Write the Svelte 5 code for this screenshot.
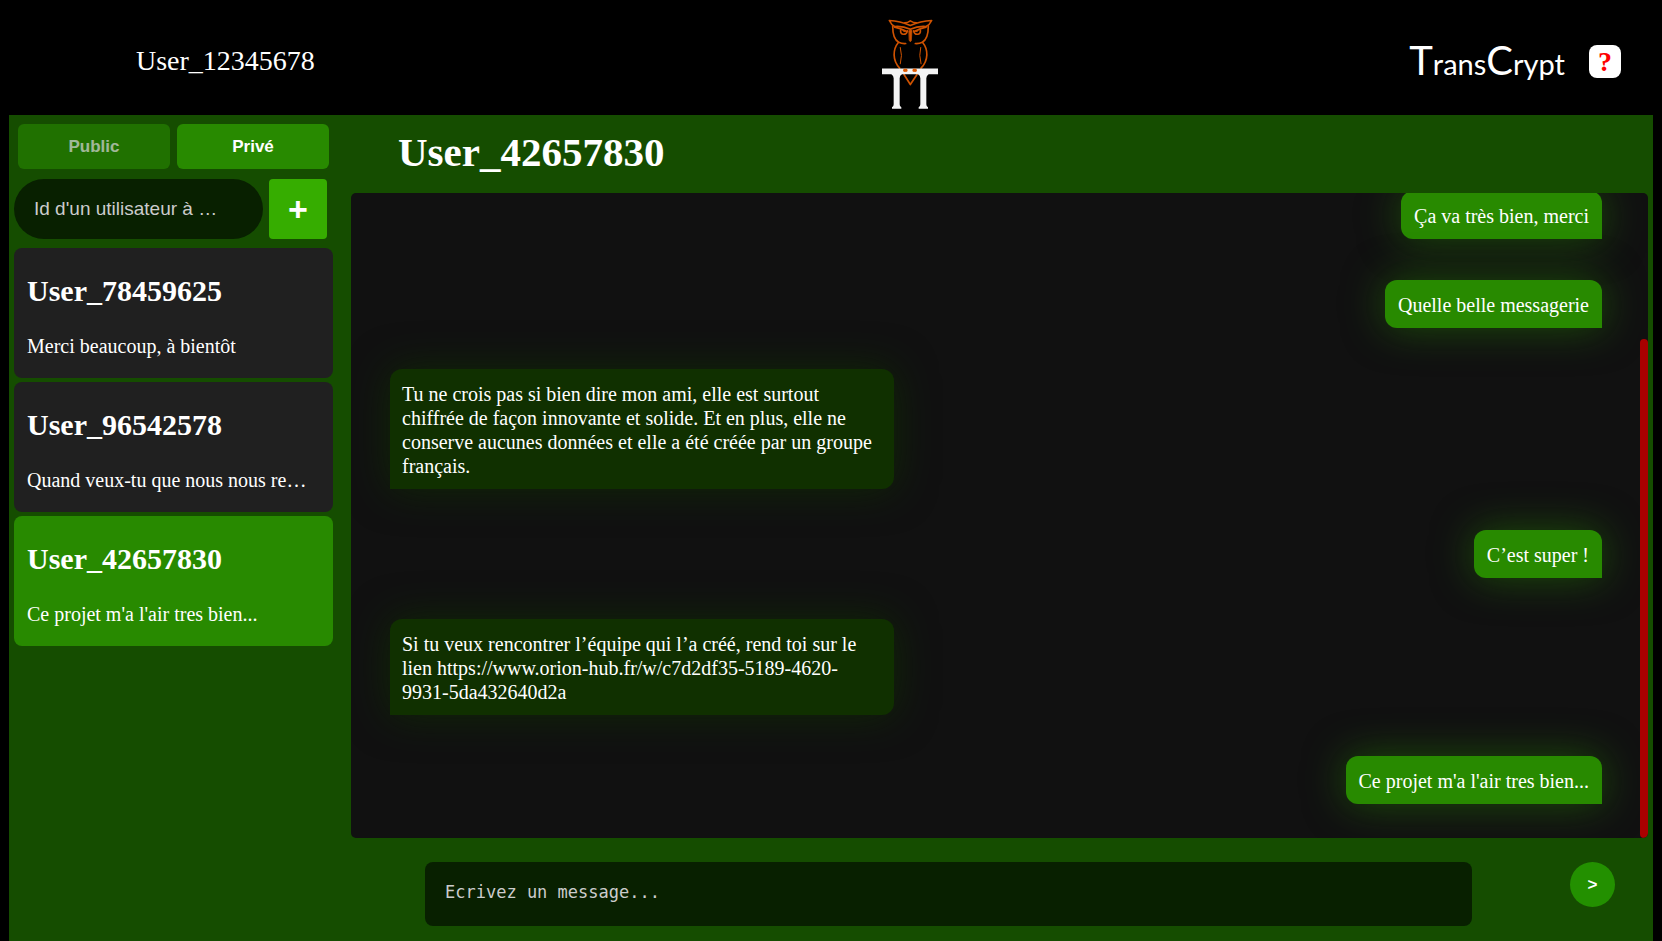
<script>
  const conversations = [
    { name: 'User_78459625', preview: 'Merci beaucoup, à bientôt' },
    { name: 'User_96542578', preview: 'Quand veux-tu que nous nous re…' },
    { name: 'User_42657830', preview: "Ce projet m'a l'air tres bien..." }
  ];
  const messages = [
    { mine: true, text: 'Ça va très bien, merci' },
    { mine: true, text: 'Quelle belle messagerie' },
    { mine: false, text: 'Tu ne crois pas si bien dire mon ami, elle est surtout chiffrée de façon innovante et solide. Et en plus, elle ne conserve aucunes données et elle a été créée par un groupe français.' },
    { mine: true, text: 'C’est super !' },
    { mine: false, text: 'Si tu veux rencontrer l’équipe qui l’a créé, rend toi sur le lien https://www.orion-hub.fr/w/c7d2df35-5189-4620-9931-5da432640d2a' },
    { mine: true, text: "Ce projet m'a l'air tres bien..." }
  ];
  let active = $state('User_42657830');
  let search = $state('');
  let draft = $state('');
</script>

<div class="page">
  <header>
    <span class="me">User_12345678</span>
    <svg class="logo" viewBox="66 58 168 272" aria-hidden="true">
      <g fill="none" stroke="#cf5200" stroke-width="5" stroke-linecap="round" stroke-linejoin="round">
        <path d="M88 62 Q120 64 151 77 Q182 64 215 62 Q209 75 198 80 Q174 78 151 88 Q128 78 104 80 Q94 75 88 62Z" />
        <path d="M134 69 Q143 69 151 63 Q160 69 169 69" />
        <path d="M98 78 C98 102 101 120 116 127 Q126 132 137 131 M205 78 C205 102 201 120 187 127 Q177 132 166 131" />
        <path d="M104 82 Q119 85 139 94 M198 82 Q184 85 164 94" />
        <path d="M122 91 C119 107 140 107 142 93 M181 91 C184 107 163 107 161 93" />
        <path d="M128 92 Q132 99 137 94 M175 92 Q171 99 166 94" stroke-width="3" />
        <path d="M147 92 Q152 89 156 92 L154 122 L151 126 L148 122Z" fill="#cf5200" stroke-width="2" />
        <path d="M115 128 C98 149 97 181 119 205 M188 128 C205 149 206 181 183 205" />
        <path d="M121 143 Q128 166 121 192 M182 143 Q176 166 183 192" stroke-width="3" />
        <path d="M132 224 L151 254 L171 224" />
      </g>
      <path fill="#f4f4f4" d="M66 206H234V223H66ZM94 223H126Q119 226 119 235V313Q119 321 124 322V327H96V322Q101 321 101 313V235Q101 227 94 223ZM174 223H206Q199 227 199 235V313Q199 321 204 322V327H176V322Q181 321 181 313V235Q181 226 174 223Z" />
      <path fill="#e25a00" d="M129 211Q129 206 136 206Q143 206 143 211Q143 217 136 216Q129 217 129 211ZM157 211Q157 206 164 206Q171 206 171 211Q171 217 164 216Q157 217 157 211Z" />
    </svg>
    <div class="brand">
      <span class="wordmark"><span class="cap">T</span>rans<span class="cap">C</span>rypt</span>
      <button class="help">?</button>
    </div>
  </header>

  <main>
    <aside>
      <div class="tabs">
        <button class="tab muted">Public</button>
        <button class="tab">Privé</button>
      </div>
      <form class="search" onsubmit={(e) => e.preventDefault()}>
        <input bind:value={search} placeholder="Id d'un utilisateur à …" aria-label="Id d'un utilisateur" />
        <button>+</button>
      </form>
      <nav>
        {#each conversations as c}
          <button class="card" class:active={active === c.name} onclick={() => (active = c.name)}>
            <span class="name">{c.name}</span>
            <span class="preview">{c.preview}</span>
          </button>
        {/each}
      </nav>
    </aside>

    <section>
      <h1>{active}</h1>
      <div class="chat">
        {#each messages as m}
          <p class="bubble" class:mine={m.mine}>{m.text}</p>
        {/each}
        <div class="thumb"></div>
      </div>
      <form class="composer" onsubmit={(e) => e.preventDefault()}>
        <textarea rows="1" bind:value={draft} placeholder="Ecrivez un message..." aria-label="Message"></textarea>
        <button>&gt;</button>
      </form>
    </section>
  </main>
</div>

<style>
  :global(body) {
    margin: 0;
    background: #000;
  }
  .page {
    display: flex;
    flex-direction: column;
    height: 100vh;
    box-sizing: border-box;
    padding: 0 9px;
    color: #fff;
    font-family: "Liberation Serif", "Times New Roman", serif;
    font-size: 20px;
    line-height: 24px;
  }
  button {
    border: 0;
    padding: 0;
    color: #fff;
    font-family: "Liberation Sans", Arial, sans-serif;
    font-weight: 700;
    cursor: pointer;
  }
  header {
    display: grid;
    grid-template-columns: 746fr 56px 683fr;
    align-items: center;
    height: 115px;
    flex: none;
    padding: 0 32px 0 127px;
  }
  .me {
    padding-top: 6px;
    font-size: 28px;
    line-height: 32px;
  }
  .logo {
    width: 56px;
    height: 91px;
    margin-top: 14px;
  }
  .brand {
    display: flex;
    align-items: center;
    justify-content: flex-end;
    gap: 24px;
    padding-top: 8px;
  }
  .wordmark {
    font-family: Lato, "Open Sans", sans-serif;
    font-size: 29px;
    line-height: 40px;
  }
  .cap {
    font-size: 40px;
  }
  .help {
    width: 32px;
    height: 33px;
    border-radius: 8px;
    background: #fff;
    color: #f00;
    font-family: "Liberation Serif", serif;
    font-size: 28px;
    line-height: 32px;
  }
  main {
    display: flex;
    flex: 1;
    min-height: 0;
    background: #154d00;
  }
  aside {
    width: 342px;
    flex: none;
    box-sizing: border-box;
    padding: 9px 18px 0 5px;
  }
  .tabs {
    display: flex;
    gap: 7px;
    padding: 0 4px;
  }
  .tab {
    flex: 1;
    height: 45px;
    border-radius: 6px;
    background: #288a00;
    font-size: 17px;
  }
  .muted {
    opacity: 0.6;
  }
  .search {
    display: flex;
    gap: 6px;
    margin: 10px 6px 9px 0;
  }
  .search input {
    flex: 1;
    min-width: 0;
    height: 60px;
    box-sizing: border-box;
    border: 0;
    border-radius: 30px;
    padding: 0 20px;
    background: #082000;
    color: #fff;
    font-family: "Liberation Sans", Arial, sans-serif;
    font-size: 19px;
  }
  input::placeholder,
  textarea::placeholder {
    color: #ccc;
    opacity: 1;
  }
  .search button {
    width: 58px;
    border-radius: 4px;
    background: #36ad00;
    font-size: 34px;
  }
  nav {
    display: flex;
    flex-direction: column;
    gap: 4px;
  }
  .card {
    display: flex;
    flex-direction: column;
    gap: 22px;
    padding: 25px 13px 17px;
    border-radius: 8px;
    background: #202020;
    font-family: "Liberation Serif", "Times New Roman", serif;
    text-align: left;
  }
  .card.active {
    background: #288a00;
  }
  .name {
    font-size: 30px;
    line-height: 36px;
  }
  .preview {
    overflow: hidden;
    font-size: 20px;
    font-weight: 400;
    line-height: 30px;
    text-overflow: ellipsis;
    white-space: nowrap;
  }
  section {
    display: flex;
    flex: 1;
    flex-direction: column;
    min-width: 0;
  }
  h1 {
    flex: none;
    margin: 0;
    padding: 13px 47px 17px;
    font-size: 41px;
    line-height: 48px;
  }
  .chat {
    position: relative;
    display: flex;
    flex: 1;
    flex-direction: column;
    align-items: flex-start;
    justify-content: flex-end;
    gap: 41px;
    min-height: 0;
    box-sizing: border-box;
    margin-right: 5px;
    padding: 0 46px 34px 39px;
    overflow: hidden;
    border-radius: 5px;
    background: #111;
  }
  .bubble {
    flex: none;
    max-width: 504px;
    box-sizing: border-box;
    margin: 0;
    padding: 13px 12px 11px;
    border-radius: 12px 12px 12px 0;
    background: #103000;
    box-shadow: 0 0 40px rgba(16, 48, 0, 0.7);
  }
  .bubble.mine {
    align-self: flex-end;
    padding: 13px 13px 11px;
    border-radius: 12px 12px 0 12px;
    background: #288a00;
    box-shadow: 0 0 40px rgba(40, 138, 0, 0.5);
  }
  .thumb {
    position: absolute;
    right: 0;
    bottom: 0;
    width: 8px;
    height: 77.4%;
    border-radius: 4px;
    background: #a00;
  }
  .composer {
    display: flex;
    flex: none;
    align-items: flex-start;
    gap: 98px;
    padding: 24px 38px 15px 74px;
  }
  textarea {
    flex: 1;
    min-width: 0;
    height: 64px;
    box-sizing: border-box;
    border: 0;
    border-radius: 8px;
    padding: 20px;
    resize: none;
    background: #082000;
    color: #fff;
    font-family: "DejaVu Sans Mono", monospace;
    font-size: 17px;
    line-height: 20px;
  }
  .composer button {
    width: 45px;
    height: 45px;
    border-radius: 50%;
    background: #239000;
    font-size: 17px;
  }
</style>
